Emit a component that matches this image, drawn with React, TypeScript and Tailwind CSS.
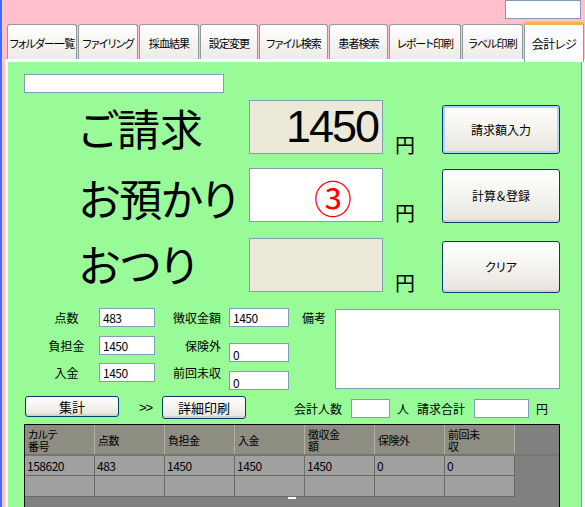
import type { ReactNode } from "react";

const TABS: { label: string; w: string }[] = [
    { label: "フォルダー一覧", w: "w-[70px]" },
    { label: "ファイリング", w: "w-[60px]" },
    { label: "採血結果", w: "w-[60px]" },
    { label: "設定変更", w: "w-[58px]" },
    { label: "ファイル検索", w: "w-[69px]" },
    { label: "患者検索", w: "w-[59px]" },
    { label: "レポート印刷", w: "w-[72px]" },
    { label: "ラベル印刷", w: "w-[61px]" },
];

const COLUMNS = ["カルテ\n番号", "点数", "負担金", "入金", "徴収金\n額", "保険外", "前回未\n収"];
const ROWS = [
    ["158620", "483", "1450", "1450", "1450", "0", "0"],
    ["", "", "", "", "", "", ""],
];

function XpButton({ children, className = "", focused = false }: { children: ReactNode; className?: string; focused?: boolean }) {
    return (
        <div
            className={`flex shrink-0 items-center justify-center rounded-[3px] border border-[#003c74] bg-linear-to-b from-white via-[#f4f3ee] to-[#e6e4dc] text-[12px] ${
                focused ? "shadow-[inset_0_0_0_2px_#b9d1f5]" : "shadow-[inset_0_-2px_0_#d8d2c6]"
            } ${className}`}
        >
            {children}
        </div>
    );
}

function TextBox({ value = "", className = "" }: { value?: string; className?: string }) {
    return (
        <div className={`shrink-0 border border-[#7f9db9] bg-white pl-[3px] text-[12px] leading-[17px] tracking-[-0.5px] ${className}`}>
            {value}
        </div>
    );
}

export default function App() {
    return (
        <div className="relative h-[507px] w-[585px] overflow-hidden border-l-2 border-[#3b6ef5] bg-[#ffc0cb] font-['Noto_Sans_CJK_JP',sans-serif] text-black [font-feature-settings:'palt']">
            {/* top right box */}
            <div className="flex justify-end pr-[4px]">
                <div className="h-[19px] w-[76px] border border-[#7f9db9] bg-white" />
            </div>

            {/* Tabs */}
            <div className="mt-[3px] flex h-[37px] items-end pl-[5px]">
                {TABS.map((t) => (
                    <div
                        key={t.label}
                        className={`${t.w} mr-[1px] flex h-[35px] shrink-0 items-center justify-center rounded-t-[3px] border border-b-0 border-[#919b9c] bg-linear-to-b from-white to-[#ecebe5] pt-[3px] text-[11px] tracking-[-0.9px] whitespace-nowrap`}
                    >
                        {t.label}
                    </div>
                ))}
                <div className="relative z-10 mb-[-3px] flex h-[40px] w-[60px] shrink-0 items-center justify-center rounded-t-[3px] border-x border-t-[3px] border-[#919b9c] border-t-[#f5b740] bg-[#fcfcfe] text-[12px] tracking-[-0.5px]">
                    会計レジ
                </div>
            </div>

            {/* Tab page */}
            <div className="ml-[3px] h-[460px] w-[580px] bg-white px-[3px] pt-[3px]">
                <div className="h-full border-r border-[#919b9c] bg-[#98fb98]">
                    <div className="ml-[16px] pt-[12px]">
                        <div className="h-[19px] w-[200px] border border-[#7f9db9] bg-white" />
                    </div>

                    {/* ご請求 */}
                    <div className="mt-[7px] flex h-[54px]">
                        <div className="w-[241px] shrink-0 pl-[71px] text-[43px] leading-[54px]">ご請求</div>
                        <div className="flex h-[54px] w-[134px] shrink-0 items-center justify-end border border-[#7f9db9] bg-[#ece9d8] pr-[4px] font-['Liberation_Sans',sans-serif] text-[45px] tracking-[-2px]">
                            1450
                        </div>
                        <div className="mb-[-1px] ml-[12px] w-[20px] shrink-0 self-end text-[20px] leading-[20px]">円</div>
                        <XpButton focused className="mt-[5px] ml-[27px] h-[49px] w-[118px]">
                            請求額入力
                        </XpButton>
                    </div>

                    {/* お預かり */}
                    <div className="mt-[14px] flex h-[54px]">
                        <div className="w-[241px] shrink-0 pl-[71px] pt-[2px] text-[43px] leading-[54px] tracking-[-1px]">お預かり</div>
                        <div className="flex h-[54px] w-[134px] shrink-0 items-end justify-end border border-[#7f9db9] bg-white pr-[30px] font-['Noto_Sans_CJK_JP',sans-serif] text-[38px] leading-[48px] text-[#ff0000]">
                            ③
                        </div>
                        <div className="mb-[-1px] ml-[12px] w-[20px] shrink-0 self-end text-[20px] leading-[20px]">円</div>
                        <XpButton className="mt-[1px] ml-[27px] h-[54px] w-[118px]">計算＆登録</XpButton>
                    </div>

                    {/* おつり */}
                    <div className="mt-[16px] flex h-[54px]">
                        <div className="w-[241px] shrink-0 pl-[71px] text-[43px] leading-[50px]">おつり</div>
                        <div className="h-[54px] w-[134px] shrink-0 border border-[#7f9db9] bg-[#ece9d8]" />
                        <div className="mb-[-1px] ml-[12px] w-[20px] shrink-0 self-end text-[20px] leading-[20px]">円</div>
                        <XpButton className="mt-[3px] ml-[27px] h-[52px] w-[118px]">クリア</XpButton>
                    </div>

                    {/* details */}
                    <div className="mt-[16px] flex items-start text-[12px]">
                        <div className="ml-[32px] flex flex-col">
                            {[["点数", "483"], ["負担金", "1450"], ["入金", "1450"]].map(([l, v], i) => (
                                <div key={l} className={`flex items-center ${i === 1 ? "mt-[9px]" : i === 2 ? "mt-[8px]" : ""}`}>
                                    <div className="w-[53px] text-center leading-[19px]">{l}</div>
                                    <TextBox value={v} className="ml-[6px] h-[19px] w-[56px]" />
                                </div>
                            ))}
                        </div>
                        <div className="flex w-[66px] flex-col text-right">
                            <div className="h-[19px] leading-[19px] whitespace-nowrap">徴収金額</div>
                            <div className="mt-[9px] h-[19px] leading-[19px]">保険外</div>
                            <div className="mt-[8px] h-[19px] leading-[19px] whitespace-nowrap">前回未収</div>
                        </div>
                        <div className="ml-[8px] flex flex-col">
                            <TextBox value="1450" className="h-[19px] w-[60px]" />
                            <TextBox value="0" className="mt-[16px] h-[19px] w-[60px] pt-[2px]" />
                            <TextBox value="0" className="mt-[9px] h-[19px] w-[60px] pt-[2px]" />
                        </div>
                        <div className="ml-[13px] w-[24px] leading-[19px]">備考</div>
                        <div className="mt-[1px] ml-[9px] h-[80px] w-[225px] border border-[#7f9db9] bg-white" />
                    </div>

                    {/* totals row */}
                    <div className="mt-[6px] flex h-[23px] items-start text-[12px]">
                        <XpButton className="ml-[17px] h-[21px] w-[94px] text-[13px]">集計</XpButton>
                        <div className="ml-[20px] w-[23px] font-['Liberation_Sans',sans-serif] text-[13px] leading-[23px] tracking-[-1px]">&gt;&gt;</div>
                        <XpButton className="h-[23px] w-[84px] text-[13px]">詳細印刷</XpButton>
                        <div className="mt-[3px] ml-[48px] w-[48px] leading-[19px] whitespace-nowrap">会計人数</div>
                        <TextBox className="mt-[3px] ml-[9px] h-[19px] w-[39px]" />
                        <div className="mt-[3px] ml-[7px] w-[12px] leading-[19px]">人</div>
                        <div className="mt-[3px] ml-[8px] w-[48px] leading-[19px] whitespace-nowrap">請求合計</div>
                        <TextBox className="mt-[3px] ml-[9px] h-[19px] w-[55px]" />
                        <div className="mt-[3px] ml-[7px] leading-[19px]">円</div>
                    </div>

                    {/* grid */}
                    <div className="relative mt-[5px] ml-[16px] h-[90px] w-[536px] border border-black bg-[#808080] text-[12px]">
                        <div className="flex h-[31px] border-b-2 border-[#77766c]">
                            {COLUMNS.map((c, i) => (
                                <div
                                    key={i}
                                    className="flex w-[70px] shrink-0 items-center border-r border-r-[#b2b1a6] bg-[#8e8d81] pl-[3px] text-[11px] leading-[12px] tracking-[-0.5px] whitespace-pre-line"
                                >
                                    {c}
                                </div>
                            ))}
                        </div>
                        {ROWS.map((r, ri) => (
                            <div key={ri} className={`flex ${ri === 0 ? "h-[20px]" : "h-[21px]"}`}>
                                {r.map((v, ci) => (
                                    <div
                                        key={ci}
                                        className="w-[70px] shrink-0 border-r border-b border-[#6b6b64] bg-[#a0a0a0] pl-[2px] leading-[19px] tracking-[-0.5px]"
                                    >
                                        {v}
                                    </div>
                                ))}
                            </div>
                        ))}
                        <div className="absolute top-[72px] left-[263px] h-[2px] w-[8px] bg-white" />
                    </div>
                </div>
            </div>
        </div>
    );
}
